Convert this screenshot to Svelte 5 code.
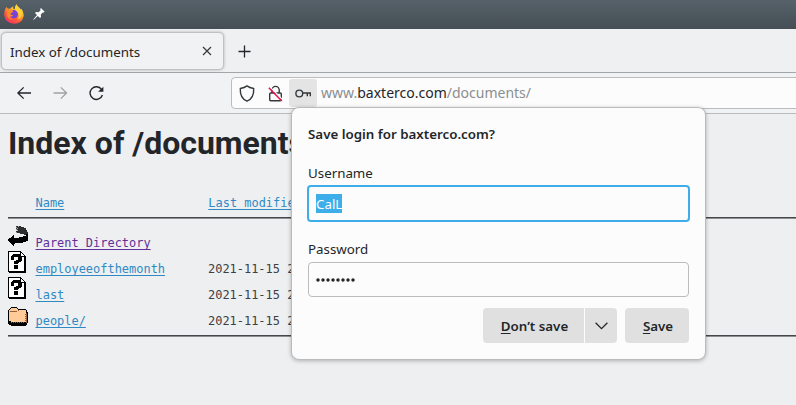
<script>
  const files = [
    { name: 'Parent Directory', icon: 'back', date: '', visited: true },
    { name: 'employeeofthemonth', icon: 'unknown', date: '2021-11-15 22:14' },
    { name: 'last', icon: 'unknown', date: '2021-11-15 22:14' },
    { name: 'people/', icon: 'folder', date: '2021-11-15 22:14' }
  ];
</script>

<div class="window">
  <div class="titlebar">
    <svg class="fox" width="20" height="20" viewBox="0 0 20 20">
      <defs>
        <linearGradient id="flame" x1="0.85" y1="0.05" x2="0.25" y2="1">
          <stop offset="0" stop-color="#fff044" /><stop offset=".35" stop-color="#ffb52b" />
          <stop offset=".62" stop-color="#ff6634" /><stop offset="1" stop-color="#f32c69" />
        </linearGradient>
      </defs>
      <path fill="url(#flame)" d="M1.5 4.5 2.4 3 4 4.8 6.5 4.5Q8 2.5 9.4 2.4L9 4.5 11 5Q11.2 1.6 12.4 .2Q13.2 2.4 15.5 4L16.2 5.5 17 4.5Q20.4 8 19.5 12.5Q18 19.5 10 19.7Q1.3 19.3.3 11.5Q0 7.2 1.5 4.5Z" />
      <circle cx="9.8" cy="10.2" r="4.1" fill="#7543d9" />
      <path fill="#ff8a2b" d="M3.2 5.2 7 5.4 9.2 7.1 8.8 8.3 7 8.8 6.4 10.4 9.2 11.2 7.9 12.6 5.6 12.4 6.8 14.6 9 15.8Q3.7 15.6 2.9 10.5Z" />
      <path fill="#ffd23b" d="M12.4.2Q13.2 2.4 15.5 4Q18.1 6.8 17.6 11.4Q16.8 14.7 13.8 15.5Q16 11.8 13.7 8.6Q10.6 6.3 11 4Q11.2 1.6 12.4.2Z" />
    </svg>
    <svg class="pin" width="12" height="12" viewBox="0 0 12 12" fill="#fcfcfc">
      <path d="m7.9 0 3.8 3.8-1 .8-.9-.2-2 2.2.2 2.5-1 1L4.8 8 1 11.4 0 12l.6-1.1L4 7.1 2 5l1-1 2.6.2 2-2L7.2 1Z" />
    </svg>
  </div>

  <div class="tabs">
    <div class="tab">
      <span>Index of /documents</span>
      <svg width="10" height="10" viewBox="0 0 10 10" fill="none" stroke="#34383b" stroke-width="1.2"><path d="m1 1 8 8M9 1 1 9" /></svg>
    </div>
    <svg class="plus" width="13" height="13" viewBox="0 0 13 13" fill="none" stroke="#232629" stroke-width="1.3"><path d="M6.5.5v12M.5 6.5h12" /></svg>
  </div>

  <div class="nav">
    <svg class="arrow" width="15" height="14" viewBox="0 0 15 14" fill="none" stroke="#232629" stroke-width="1.3" stroke-linejoin="round"><path d="M14 7H1M6.7 1.4.9 7 6.7 12.6" /></svg>
    <svg class="arrow forward" width="15" height="14" viewBox="0 0 15 14" fill="none" stroke="#a0a2a4" stroke-width="1.3" stroke-linejoin="round"><path d="M.5 7H13.4M7.8 1.4 13.6 7 7.8 12.6" /></svg>
    <svg class="reload" width="15" height="15" viewBox="0 0 15 15"><path fill="none" stroke="#232629" stroke-width="1.4" d="M12.5 3.4A6.3 6.3 0 1 0 13.4 9" /><path fill="#232629" d="M14.4.7v5H9.1Z" /></svg>
    <div class="urlbar">
      <svg class="shield" width="16" height="17" viewBox="0 0 16 17" fill="none" stroke="#34383b" stroke-width="1.4" stroke-linejoin="round"><path d="M8 .9Q10.4 2.7 14.7 3.5Q15.2 13.2 8 16.2Q.8 13.2 1.3 3.5Q5.6 2.7 8 .9Z" /></svg>
      <svg class="lock" width="15" height="17" viewBox="0 0 15 17" fill="none" stroke="#34383b" stroke-width="1.4"><path d="M4 8V5a3.6 3.6 0 0 1 7.2 0v3M2.8 8h9.4q1.1 0 1.1 1.1v5.5q0 1.1-1.1 1.1H2.8q-1.1 0-1.1-1.1V9.1Q1.7 8 2.8 8Z" /><path stroke="#fcfcfc" stroke-width="1.2" d="m2.2 2.2 12.8 13" /><path stroke="#e5134d" stroke-width="1.5" d="m.8 2.8 13 13.2" /></svg>
      <div class="keybox"><svg width="17" height="9" viewBox="0 0 17 9" fill="none" stroke="#34383b" stroke-width="1.4"><circle cx="4.3" cy="4.5" r="3.4" /><path d="M7.7 4H16M12.3 4v3.3M15.3 4v3.3" /></svg></div>
      <div class="url">www.<b>baxterco.com</b>/documents/</div>
    </div>
  </div>

  <div class="page">
    <h1>Index of /documents</h1>
    <div class="columns"><a href="#name">Name</a><a class="modified" href="#modified">Last modified</a></div>
    <div class="rule"></div>
    <div class="listing">
      {#each files as file}
        <div class="file">
          <span class="icon {file.icon}">
            {#if file.icon === 'back'}
              <svg width="20" height="20" viewBox="0 0 20 20" shape-rendering="crispEdges"><path fill="#2d2d2d" d="M8 0h5v1h3v1h2v2h1v2h1v3h-4V8h-4V7H8V5h1V3H8Z" /><path fill="#aaa" d="M8 1h1v1H8Zm1 1h1v1H9ZM8 3h1v1H8Zm1 1h1v1H9Zm-1 2h1v1H8Zm2-6h1v1h-1Z" /><path fill="#000" d="M5 9h1v3h5v-1h4v-1h3V8h2v7h-2v1h-3v1H7v1H6v2H5v-1H4v-1H3v-1H2v-1H1v-1H0v-2h1v-1h2v-1h1v-1h1Z" /></svg>
            {:else if file.icon === 'unknown'}
              <svg width="18" height="22" viewBox="0 0 18 22" shape-rendering="crispEdges"><path d="M0 0h13v1h1v1h1v1h1v1h1v1h1v17H1v-1H0Z" /><path fill="#fff" d="M1 1h11v5h4v14H1Z" /><path fill="#fff" d="M13 2h1v1h1v1h1v1h-3Z" /><path d="M5 3h7v1h1v1h1v5h-1v1h-2v1h-1v1H6v-3h2V9h2V6H6v3H3V5h1V4h1Zm1 11h4v4H6Z" /></svg>
            {:else}
              <svg width="20" height="19" viewBox="0 0 20 19" shape-rendering="crispEdges"><path d="M2 1h1V0h6v1h1v1h8v1h1v2h1v11h-1v2h-1v1H3v-1H1v-1H0V3h1V2h1Z" /><path fill="#fc9" d="M3 1h6v1h1v1h8v12H3v-1H1V3h1V2h1Z" /><path fill="#965f35" d="M2 4h7v1H2Zm8-1h1v1h-1Zm7 4h1v1h-1Zm0 2h1v1h-1Zm0 2h1v1h-1Zm0 2h1v1h-1ZM3 15h1v1H3Zm2 0h1v1H5Zm2 0h1v1H7Zm2 0h1v1H9Zm2 0h1v1h-1Zm2 0h1v1h-1Zm2 0h1v1h-1Zm3-9h1v10h-1Z" /></svg>
            {/if}
          </span>
          <a class:visited={file.visited} href="#file">{file.name}</a>
          <span class="date">{file.date}</span>
        </div>
      {/each}
    </div>
    <div class="rule"></div>
  </div>

  <div class="popup">
    <div class="title">Save login for baxterco.com?</div>
    <div class="label">Username</div>
    <div class="field focused"><span>CalL</span></div>
    <div class="label second">Password</div>
    <div class="field">
      <svg width="40" height="4" viewBox="0 0 40 4" fill="#232629">{#each Array(8) as _, i}<circle cx={2 + i * 5} cy="2" r="1.75" />{/each}</svg>
    </div>
    <div class="actions">
      <div class="button dont"><span><u>D</u>on’t save</span></div>
      <div class="button more"><svg width="13" height="8" viewBox="0 0 13 8" fill="none" stroke="#232629" stroke-width="1.3"><path d="m.6.8 5.9 5.9L12.4.8" /></svg></div>
      <div class="button save"><span><u>S</u>ave</span></div>
    </div>
  </div>
</div>

<style>
  .window { position: relative; width: 796px; height: 405px; overflow: hidden; background: #eeeff1; color: #232629; font: 13.33px/18px "Noto Sans", sans-serif; }
  .window *, .window { box-sizing: border-box; }
  svg { display: block; flex: none; }
  .titlebar { height: 29px; display: flex; align-items: flex-start; background: linear-gradient(#566169, #454e55); }
  .fox { margin: 4px 0 0 4px; }
  .pin { margin: 8px 0 0 9px; }
  .tabs { height: 44px; display: flex; align-items: center; background: #eff0f1; border-bottom: 1px solid #a3a6a9; padding-left: 1px; }
  .tab { width: 223px; height: 38px; margin-top: 1px; padding: 0 11px 0 8px; border: 1px solid #bfc1c3; border-radius: 5px; background: #f1f2f3; box-shadow: 0 0 3px #0004; display: flex; align-items: center; justify-content: space-between; }
  .tab span { padding-top: 2px; }
  .plus { margin: 2px 0 0 14px; }
  .nav { height: 41px; display: flex; align-items: center; background: #f1f2f4; border-bottom: 1px solid #babcbe; padding-left: 17px; }
  .forward { margin-left: 21px; }
  .reload { margin-left: 21px; }
  .urlbar { margin: 0 -6px 0 127px; flex: 1; height: 32px; border: 1px solid #babcbe; border-radius: 4px; background: #fcfcfc; display: flex; align-items: center; }
  .shield { margin-left: 7px; }
  .lock { margin-left: 13px; }
  .keybox { width: 28px; height: 28px; margin-left: 6px; border-radius: 3px; background: #e4e4e4; display: flex; align-items: center; justify-content: center; }
  .url { margin-left: 4px; font-size: 14px; line-height: 20px; color: #8b8e91; white-space: nowrap; }
  .url b { font-weight: 400; color: #232629; }
  .page { padding: 0 0 0 8px; font: 11.96px/14px "DejaVu Sans Mono", monospace; }
  h1 { margin: 0; padding-top: 10px; height: 82px; font: bold 32px/38px Roboto, sans-serif; white-space: nowrap; }
  .page a { color: #2f8ac4; text-decoration: underline; text-underline-offset: 2px; }
  .page a.visited { color: #62309a; }
  .columns { display: flex; height: 21px; padding-left: 27.5px; }
  .columns a { white-space: pre; width: 100px; }
  .columns a:first-child { width: auto; }
  .columns .modified { margin-left: 144px; }
  .rule { height: 2px; border-top: 1px solid #45484b; border-bottom: 1px solid #8c8e90; }
  .listing { height: 116px; padding-top: 5px; }
  .file { height: 26px; display: flex; align-items: flex-start; }
  .icon { width: 27.5px; }
  .back { padding-top: 2px; }
  .unknown { padding-top: 1px; }
  .folder { padding-top: 5px; }
  .file a { width: 172.5px; padding-top: 12px; }
  .date { padding-top: 12px; white-space: pre; color: #3c4043; }
  .popup { position: absolute; left: 291px; top: 107px; width: 415px; height: 253px; padding: 17px 16px; border: 1px solid #b9bbbd; border-radius: 8px; background: #fcfcfc; box-shadow: 0 1px 4px #0004; }
  .title { font-weight: 600; }
  .label { margin-top: 21px; }
  .second { margin-top: 18px; }
  .field { width: 381px; height: 35px; margin-top: 4px; padding-left: 7px; border: 1px solid #babcbe; border-radius: 4px; display: flex; align-items: center; }
  .focused { width: 383px; height: 37px; margin: 3px 0 0 -1px; border: 2px solid #3daee9; }
  .focused span { background: #3daee9; color: #fcfcfc; height: 19px; line-height: 20px; }
  .actions { display: flex; justify-content: flex-end; margin-top: 11px; }
  .button { height: 35px; display: flex; align-items: center; justify-content: center; background: #e0e0e0; border-radius: 4px; font-weight: 600; }
  .button span { padding: 1px 0 0 2px; }
  .dont { width: 101px; border-radius: 4px 0 0 4px; }
  .more { width: 32px; margin-left: 1px; border-radius: 0 4px 4px 0; }
  .save { width: 64px; margin-left: 8px; }
  u { text-underline-offset: 2px; }
</style>
